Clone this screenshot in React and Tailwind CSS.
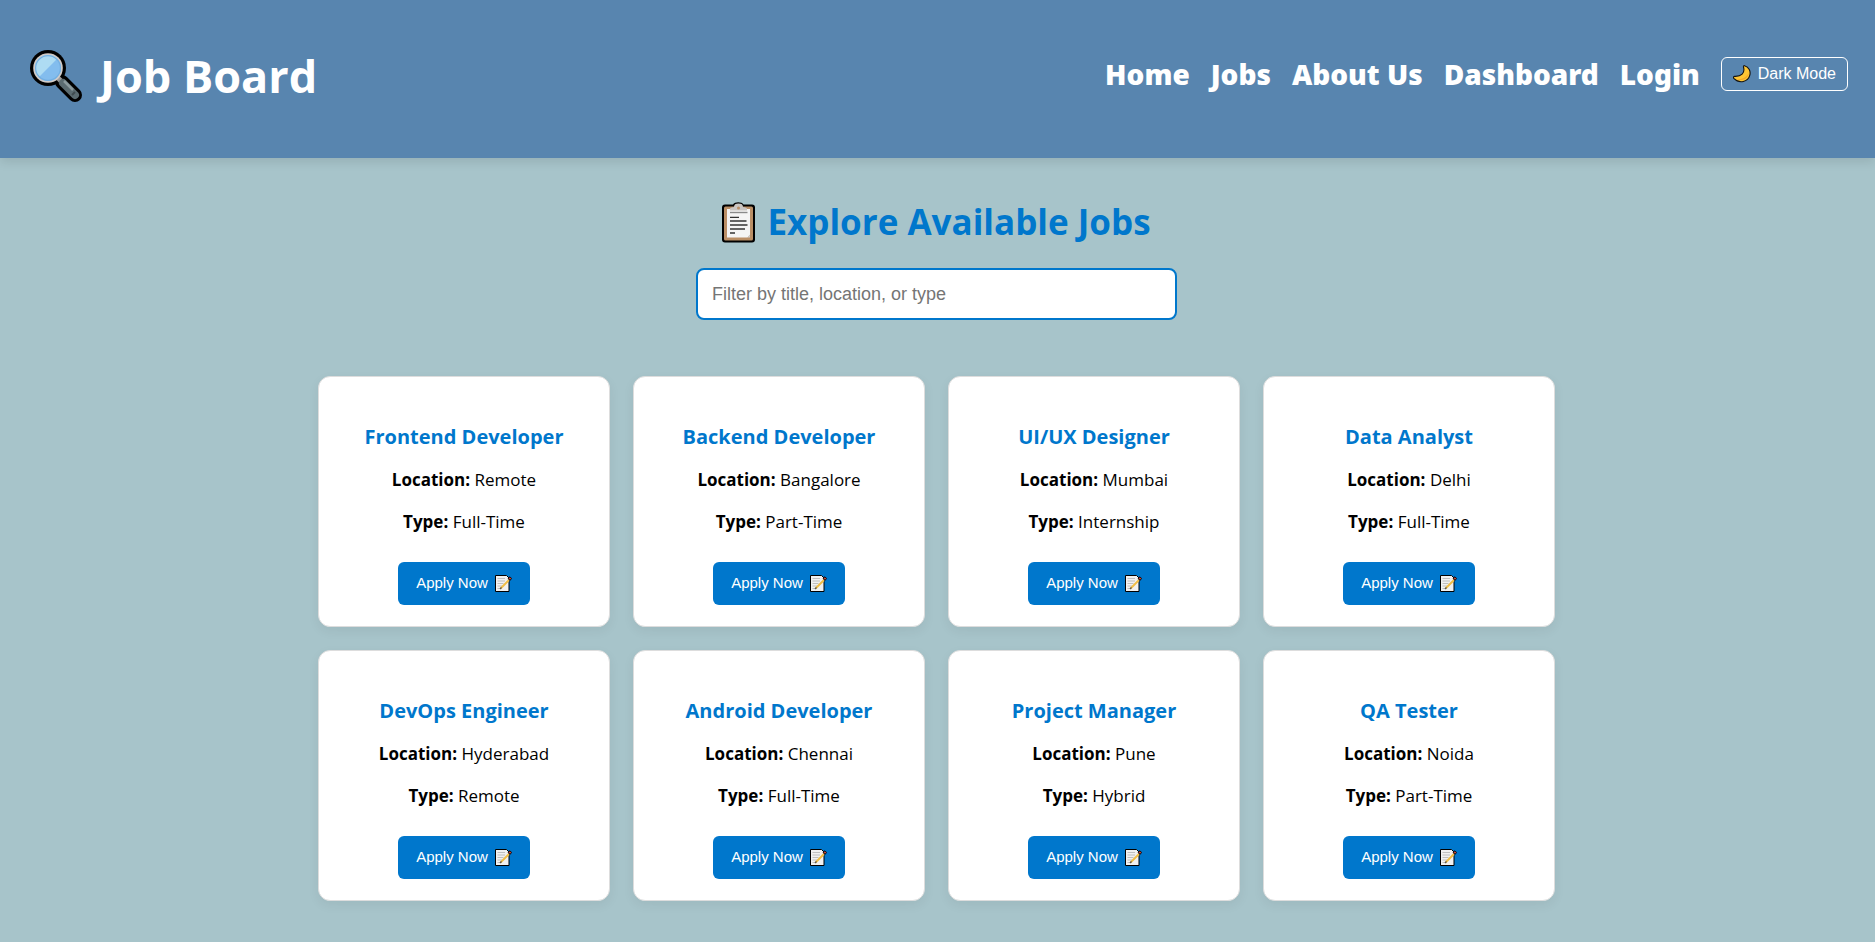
const NAV = ["Home", "Jobs", "About Us", "Dashboard", "Login"];

const JOBS = [
  { title: "Frontend Developer", location: "Remote", type: "Full-Time" },
  { title: "Backend Developer", location: "Bangalore", type: "Part-Time" },
  { title: "UI/UX Designer", location: "Mumbai", type: "Internship" },
  { title: "Data Analyst", location: "Delhi", type: "Full-Time" },
  { title: "DevOps Engineer", location: "Hyderabad", type: "Remote" },
  { title: "Android Developer", location: "Chennai", type: "Full-Time" },
  { title: "Project Manager", location: "Pune", type: "Hybrid" },
  { title: "QA Tester", location: "Noida", type: "Part-Time" },
];

function MagnifierIcon() {
  return (
    <svg viewBox="0 0 52 52" className="size-[52px] shrink-0" aria-hidden="true">
      <path d="M28 28 L32 32" stroke="#000" strokeWidth="9" />
      <path d="M32 32 L45 45" stroke="#000" strokeWidth="14" strokeLinecap="round" />
      <circle cx="18" cy="18" r="18" fill="#000" />
      <path d="M26 26 L33 33" stroke="#9b9b9b" strokeWidth="5" />
      <path d="M33 33 L45 45" stroke="#5b6b70" strokeWidth="8" strokeLinecap="round" />
      <path d="M34 31 L43 40" stroke="#8c9a9d" strokeWidth="2.5" />
      <path d="M42 45 L45 42" stroke="#3f4b4f" strokeWidth="2" />
      <circle cx="18" cy="18" r="14.8" fill="#cfcbc9" />
      <circle cx="18" cy="18" r="13" fill="#83bdee" />
      <path d="M8.8 27.2 A13 13 0 0 1 27.2 8.8 Z" fill="#aedcf3" />
      <circle cx="18" cy="18" r="12.4" fill="none" stroke="#74b0e2" strokeWidth="1.2" />
    </svg>
  );
}

function ClipboardIcon() {
  return (
    <svg viewBox="0 0 33 41" className="h-[41px] w-[33px] shrink-0" aria-hidden="true">
      <path d="M3 2.4 H11 C12.5 -0.6 20 -0.6 21.5 2.4 H30 Q33 2.4 33 5.4 V37.5 Q33 40.5 30 40.5 H3 Q0 40.5 0 37.5 V5.4 Q0 2.4 3 2.4 Z" fill="#000" />
      <rect x="2" y="4.6" width="29" height="34" rx="1.5" fill="#ba8f66" />
      <path d="M5 7 H28 V32.5 L25.5 35.5 H5 Z" fill="#f4f4f4" />
      <path d="M28 32.5 L25.5 35.5 H28 Z" fill="#cfcfcf" />
      <path d="M8 8.5 V6.5 Q9 5 12 5 Q12 1.6 16.5 1.6 Q21 1.6 21 5 Q24 5 25 6.5 V8.5 Z" fill="#c9c5c2" />
      <circle cx="16.5" cy="6" r="1.5" fill="#ba8f66" />
      <path d="M8 10.5 H25.5" stroke="#8a8a8a" strokeWidth="1.4" />
      <path d="M8 15.4 H17 M8 19 H24.5 M8 23 H25.5 M8 27 H23 M8 31 H13" stroke="#333" strokeWidth="1.3" />
    </svg>
  );
}

function MoonIcon() {
  return (
    <svg viewBox="0 0 18 18" className="size-[18px] shrink-0" aria-hidden="true">
      <path d="M11.5 0.7 C16 1.8 18 6.5 16.7 10.7 C15 16.6 6.5 19.3 0.8 13.4 C0 12.5 0.6 11.3 1.8 11.4 C8 11.6 12.3 8.5 10.5 2 C10.3 1.2 10.7 0.5 11.5 0.7 Z" fill="#fdc534" stroke="#111" strokeWidth="1.1" />
      <path d="M15.9 8 C15 14 8.5 17 3 13.8 C8.5 15 13.5 12.5 15.9 8 Z" fill="#f3a928" />
    </svg>
  );
}

function MemoIcon() {
  return (
    <svg viewBox="0 0 17 17" className="size-[17px] shrink-0" aria-hidden="true">
      <path d="M0.5 0.5 H11.5 L14 3 V16.5 H0.5 Z" fill="#f1f1f1" stroke="#000" />
      <path d="M2.5 3.5 H10 M2.5 6 H10 M2.5 8.5 H8.5 M2.5 11 H7 M2.5 13.5 H5.5" stroke="#b9b9b9" strokeWidth="0.9" />
      <path d="M5.5 13.5 L14 5" stroke="#f0bd45" strokeWidth="1.9" />
      <path d="M5 14 L6.5 12.5" stroke="#555" strokeWidth="1.2" />
      <path d="M13 3.2 L15 1.8 L16.6 3.5 L15 5.4 Z" fill="#c2453a" stroke="#000" strokeWidth="0.9" />
    </svg>
  );
}

function JobCard({ job }) {
  return (
    <article className="flex flex-col items-center rounded-xl border border-[#dddddd] bg-white px-6 pt-11 pb-[21px] text-center text-black shadow-[0_4px_12px_rgba(0,0,0,0.06)]">
      <h3 className="text-[20px] leading-8 font-bold text-[#0077cc]">{job.title}</h3>
      <p className="mt-3 text-[17px] leading-[30px]">
        <strong className="font-bold">Location:</strong> {job.location}
      </p>
      <p className="mt-3 text-[17px] leading-[30px]">
        <strong className="font-bold">Type:</strong> {job.type}
      </p>
      <button
        type="button"
        className="mt-[25px] flex h-[43px] cursor-pointer items-center gap-[7px] rounded-md bg-[#0077cc] px-[18px] font-['Liberation_Sans',Arial,sans-serif] text-[15px] text-white"
      >
        Apply Now
        <MemoIcon />
      </button>
    </article>
  );
}

export default function App() {
  return (
    <div className="min-h-screen bg-[#a7c4ca] pb-10 font-['Open_Sans','Noto_Sans',sans-serif]">
      <header className="flex flex-wrap items-start justify-between gap-x-6 bg-[#5885af] pt-[41px] pr-[27px] pb-[47px] pl-[30px] text-white shadow-[0_4px_10px_rgba(0,0,0,0.1)]">
        <h1 className="flex items-center gap-[18px] text-[45px] leading-[70px] font-bold">
          <MagnifierIcon />
          Job Board
        </h1>
        <nav className="flex flex-wrap items-center gap-x-[21px] pt-3.5">
          {NAV.map((item) => (
            <a key={item} href="#" className="font-['Noto_Sans','Open_Sans',sans-serif] text-[28px] leading-[38px] font-black">
              {item}
            </a>
          ))}
          <button
            type="button"
            className="flex h-[34px] cursor-pointer items-center gap-[7px] rounded-md border border-white px-[11px] font-['Liberation_Sans',Arial,sans-serif] text-[16px]"
          >
            <MoonIcon />
            Dark Mode
          </button>
        </nav>
      </header>

      <main className="flex flex-col items-center pt-10 pr-[26px] pl-6">
        <h2 className="flex items-center gap-3 text-[35px] leading-[48px] font-bold text-[#0077cc]">
          <ClipboardIcon />
          Explore Available Jobs
        </h2>
        <input
          type="text"
          aria-label="Filter jobs"
          placeholder="Filter by title, location, or type"
          className="mt-[22px] h-[52px] w-full max-w-[481px] rounded-lg border-2 border-[#0077cc] bg-white px-3.5 font-['Liberation_Sans',Arial,sans-serif] text-[18px] text-black placeholder:text-[#757575]"
        />
        <section
          aria-label="Job listings"
          className="mt-14 grid w-full max-w-[1237px] grid-cols-1 gap-[23px] sm:grid-cols-2 lg:grid-cols-4"
        >
          {JOBS.map((job) => (
            <JobCard key={job.title} job={job} />
          ))}
        </section>
      </main>
    </div>
  );
}
